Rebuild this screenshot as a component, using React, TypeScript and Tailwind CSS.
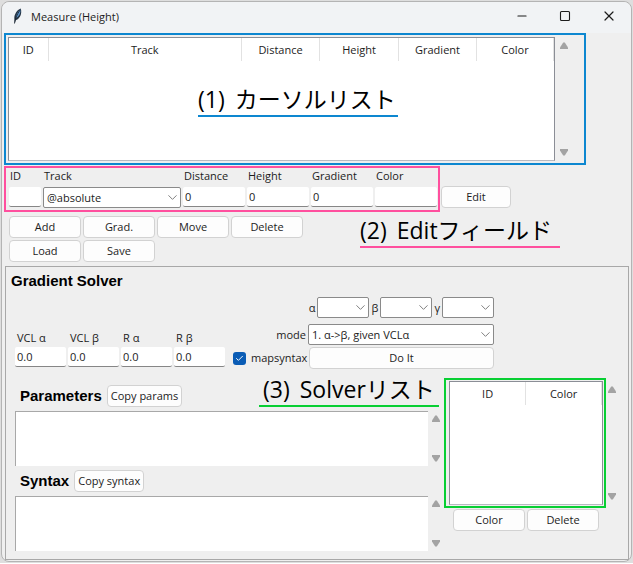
import type { ReactNode } from "react";
import { Check, ChevronDown, Minus, Square, X } from "lucide-react";

const BUTTON =
  "h-[22px] shrink-0 rounded-[4px] border border-[#d2d2d2] bg-[#fdfdfd] text-center text-[11px] leading-[18px]";
const FIELD =
  "h-5 w-full min-w-0 rounded-[2px] border-b border-[#868686] bg-white px-0.5 text-[11px] leading-4 outline-none";

function Button({ children, className = "w-[72px]" }: { children: ReactNode; className?: string }) {
  return (
    <button type="button" className={`${BUTTON} ${className}`}>
      {children}
    </button>
  );
}

function Combo({ id, label, options, className }: { id: string; label?: string; options: string[]; className: string }) {
  return (
    <div className={`relative ${className}`}>
      <select
        id={id}
        aria-label={label}
        className="block h-[21px] w-full appearance-none rounded-[2px] border border-[#8a8a8a] bg-white px-[3px] text-[11px] leading-4 outline-none"
      >
        {options.map((o) => (
          <option key={o}>{o}</option>
        ))}
      </select>
      <ChevronDown className="pointer-events-none absolute right-px top-[3px] size-[15px] text-[#808080]" strokeWidth={1.6} />
    </div>
  );
}

function ScrollBar({ className }: { className: string }) {
  return (
    <div className={`flex shrink-0 flex-col items-center justify-between ${className}`}>
      <svg viewBox="0 0 8 7" className="h-[7px] w-2" fill="#a3a3a3">
        <path d="M3.2.5h1.6L8 5.5V7H0V5.500z" />
      </svg>
      <svg viewBox="0 0 8 7" className="h-[7px] w-2" fill="#a3a3a3">
        <path d="M0 0h8v1.500L4.800 6.500H3.200L0 1.500z" />
      </svg>
    </div>
  );
}

function ListTable({ columns, label }: { columns: { name: string; width: string }[]; label: string }) {
  return (
    <div className="h-[124px] min-w-0 flex-1 border border-[#8b8e96] border-b-[#b8bac2] bg-white">
      <table aria-label={label} className="w-full table-fixed border-collapse">
        <thead>
          <tr className="h-[23px]">
            {columns.map((c) => (
              <th
                key={c.name}
                scope="col"
                className={`border-r border-[#e2e2e2] p-0 text-center text-[11px] font-normal leading-4 ${c.width}`}
              >
                {c.name}
              </th>
            ))}
          </tr>
        </thead>
        <tbody />
      </table>
    </div>
  );
}

function Caption({ number, children, className }: { number: string; children: ReactNode; className: string }) {
  return (
    <div
      className={`absolute z-10 flex gap-2.5 whitespace-nowrap border-b-2 font-['Open_Sans','Noto_Sans_CJK_JP',sans-serif] text-[23px] font-normal leading-8 text-black ${className}`}
    >
      <span>{number}</span>
      <span>{children}</span>
    </div>
  );
}

const cursorColumns = [
  { name: "ID", width: "w-[39px]" },
  { name: "Track", width: "w-auto" },
  { name: "Distance", width: "w-[78px]" },
  { name: "Height", width: "w-[79px]" },
  { name: "Gradient", width: "w-[78px]" },
  { name: "Color", width: "w-[77px]" },
];

const solverColumns = [
  { name: "ID", width: "w-1/2" },
  { name: "Color", width: "w-1/2" },
];

const editFields = [
  { name: "Distance", value: "0" },
  { name: "Height", value: "0" },
  { name: "Gradient", value: "0" },
  { name: "Color", value: "" },
];

function EditField({ name, value }: { name: string; value: string }) {
  const id = `edit-${name.toLowerCase()}`;
  return (
    <div className="flex flex-col gap-[3px]">
      <label htmlFor={id} className="px-px">
        {name}
      </label>
      <input id={id} defaultValue={value} className={FIELD} />
    </div>
  );
}

function TextPanel({ title, action, id }: { title: string; action: string; id: string }) {
  return (
    <div className="flex flex-col gap-1">
      <div className="flex items-center gap-[5px] pl-[5px]">
        <label htmlFor={id} className="font-['Liberation_Sans',Arial,sans-serif] text-[15px] font-bold leading-5 text-black">
          {title}
        </label>
        <Button className="px-[3px]">{action}</Button>
      </div>
      <div className="flex">
        <textarea
          id={id}
          className="block h-[55px] min-w-0 flex-1 resize-none border-l border-t border-[#a8a8a8] bg-white outline-none"
        />
        <ScrollBar className="w-4 py-1" />
      </div>
    </div>
  );
}

export default function App() {
  return (
    <div className="bg-[#dedede] p-px font-['Open_Sans','Noto_Sans',sans-serif] text-[11px] leading-4 text-[#1c1c1c]">
      <main className="rounded-lg border border-[#b4b4b4] bg-[#efefef] pb-px">
        <header className="flex h-[31px] items-center rounded-t-lg bg-[#f1f3f5] pl-2.5 pr-3.5">
          <svg viewBox="0 0 12 16" className="mb-1 h-4 w-3" aria-hidden="true">
            <path d="M2.500 15.500 2.300 10C2.500 6 5 2 8.700.5c1 2.500.6 6-.8 8.300C6.700 10.800 5 12 3.800 12.300z" fill="#263545" />
            <path d="M4 10C4 7 5.800 3.500 8.300 1.500 8.800 4.500 7.500 8 4 10z" fill="#5c94cc" />
            <path d="M2.500 15.500C3.200 11 5 6.500 8 2" fill="none" stroke="#17212c" strokeWidth=".8" />
          </svg>
          <h1 className="ml-[7px] flex-1 pb-0.5 text-[11px]">Measure (Height)</h1>
          <div className="flex items-center gap-[30px] pb-1">
            <button type="button" aria-label="Minimize">
              <Minus className="size-3.5" strokeWidth={1.8} />
            </button>
            <button type="button" aria-label="Maximize">
              <Square className="size-3" strokeWidth={2.2} />
            </button>
            <button type="button" aria-label="Close">
              <X className="size-4" strokeWidth={1.8} />
            </button>
          </div>
        </header>

        <section className="relative ml-0.5 mr-[45px] flex border-2 border-[#0d87d0] p-0.5">
          <ListTable columns={cursorColumns} label="カーソルリスト" />
          <ScrollBar className="mr-[9px] w-[18px] py-[5px]" />
          <Caption number="(1)" className="left-[192px] top-12 w-[200px] border-[#0d87d0]">
            カーソルリスト
          </Caption>
        </section>

        <section className="relative mt-px pl-0.5">
          <div className="flex items-end gap-px">
            <div className="flex h-[46px] gap-0.5 border-2 border-[#ff4f9e] pl-[3px] pr-px">
              <div className="w-8">
                <EditField name="ID" value="" />
              </div>
              <div className="flex w-[138px] flex-col gap-[3px]">
                <label htmlFor="edit-track" className="px-px">
                  Track
                </label>
                <Combo id="edit-track" options={["@absolute"]} className="w-full" />
              </div>
              {editFields.map((f) => (
                <div key={f.name} className="w-[62px]">
                  <EditField {...f} />
                </div>
              ))}
            </div>
            <div className="pb-1">
              <Button className="w-[70px]">Edit</Button>
            </div>
          </div>
          <div className="mt-1 flex flex-col gap-0.5 pl-[5px]">
            <div className="flex gap-0.5">
              <Button>Add</Button>
              <Button>Grad.</Button>
              <Button>Move</Button>
              <Button>Delete</Button>
            </div>
            <div className="flex gap-0.5">
              <Button>Load</Button>
              <Button>Save</Button>
            </div>
          </div>
          <Caption number="(2)" className="left-[358px] top-12 w-[200px] border-[#ff4f9e]">
            Editフィールド
          </Caption>
        </section>

        <section className="ml-[3px] mr-0.5 mt-1 border border-[#a8a8a8] pb-2 pt-1">
          <h2 className="pl-[5px] font-['Liberation_Sans',Arial,sans-serif] text-[15px] font-bold leading-5 text-black">
            Gradient Solver
          </h2>
          <div className="mt-1.5 flex items-end gap-2 pl-[9px]">
            <div className="flex gap-0.5 pb-0.5">
              {["VCL α", "VCL β", "R α", "R β"].map((name) => (
                <div key={name} className="flex w-[51px] flex-col gap-px">
                  <label htmlFor={name} className="px-0.5">
                    {name}
                  </label>
                  <input id={name} defaultValue="0.0" className={FIELD} />
                </div>
              ))}
            </div>
            <div className="flex w-[261px] flex-col gap-0.5">
              <div className="mb-1 flex items-center justify-end gap-0.5">
                <label htmlFor="alpha">α</label>
                <Combo id="alpha" options={[""]} className="w-[52px]" />
                <label htmlFor="beta">β</label>
                <Combo id="beta" options={[""]} className="w-[52px]" />
                <label htmlFor="gamma">γ</label>
                <Combo id="gamma" options={[""]} className="w-[52px]" />
              </div>
              <div className="flex items-center gap-0.5">
                <label htmlFor="mode" className="flex-1 text-right">
                  mode
                </label>
                <Combo id="mode" options={["1. α->β, given VCLα"]} className="w-[186px]" />
              </div>
              <div className="flex items-center">
                <label className="flex flex-1 items-center gap-[5px]">
                  <span className="grid size-[13px] place-items-center">
                    <input
                      type="checkbox"
                      defaultChecked
                      className="col-start-1 row-start-1 size-[13px] appearance-none rounded-[3px] bg-[#0a5cb5]"
                    />
                    <Check className="pointer-events-none col-start-1 row-start-1 size-[9px] text-white" strokeWidth={2.5} />
                  </span>
                  mapsyntax
                </label>
                <Button className="w-[185px]">Do It</Button>
              </div>
            </div>
          </div>

          <div className="relative mt-[9px] flex">
            <div className="flex min-w-0 flex-1 flex-col gap-1 pl-[9px] pt-[7px]">
              <TextPanel id="parameters" title="Parameters" action="Copy params" />
              <TextPanel id="syntax" title="Syntax" action="Copy syntax" />
            </div>
            <div className="mr-[11px] flex flex-col">
              <div className="flex">
                <div className="flex w-[162px] border-2 border-[#08cf33] py-px pl-[3px] pr-px">
                  <ListTable columns={solverColumns} label="Solverリスト" />
                </div>
                <ScrollBar className="w-[11px] py-2" />
              </div>
              <div className="mt-px flex gap-0.5 pl-[9px]">
                <Button>Color</Button>
                <Button>Delete</Button>
              </div>
            </div>
            <Caption number="(3)" className="-top-[5px] right-[189px] w-[180px] border-[#08cf33] pl-1">
              Solverリスト
            </Caption>
          </div>
        </section>
      </main>
    </div>
  );
}
